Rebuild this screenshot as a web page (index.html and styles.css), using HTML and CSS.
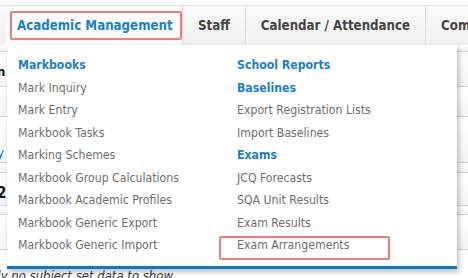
FILE: index.html
```html
<!DOCTYPE html>
<html lang="en">
<head>
    <meta charset="utf-8">
    <title>Academic Management</title>
    <link rel="stylesheet" href="styles.css">
</head>
<body>

    <!-- top menu -->
    <header class="topbar">
        <nav class="tabs">
            <a class="tab valgt" href="#"><span class="mark">Academic Management</span></a>
            <a class="tab" href="#">Staff</a>
            <a class="tab" href="#">Calendar / Attendance</a>
            <a class="tab" href="#">Communication</a>
        </nav>
    </header>

    <!-- page behind the menu -->
    <section class="bag">
        <div class="raekke r1"></div>
        <div class="raekke r2"><b class="stump">n</b></div>
        <div class="raekke r3"></div>
        <div class="raekke r4"><span class="stump blaa">y</span></div>
        <div class="raekke r5"></div>
        <div class="raekke r6"><b class="stump">2</b></div>
        <div class="raekke r7"></div>
        <div class="raekke r8"></div>
        <p class="tom">Currently no subject set data to show</p>
    </section>

    <!-- dropdown -->
    <div class="dropdown">
        <ul class="kolonne">
            <li class="overskrift">Markbooks</li>
            <li>Mark Inquiry</li>
            <li>Mark Entry</li>
            <li>Markbook Tasks</li>
            <li>Marking Schemes</li>
            <li>Markbook Group Calculations</li>
            <li>Markbook Academic Profiles</li>
            <li>Markbook Generic Export</li>
            <li>Markbook Generic Import</li>
        </ul>
        <ul class="kolonne">
            <li class="overskrift">School Reports</li>
            <li class="overskrift">Baselines</li>
            <li>Export Registration Lists</li>
            <li>Import Baselines</li>
            <li class="overskrift">Exams</li>
            <li>JCQ Forecasts</li>
            <li>SQA Unit Results</li>
            <li>Exam Results</li>
            <li class="markeret">Exam Arrangements</li>
        </ul>
    </div>

</body>
</html>
```

FILE: styles.css
```css
body {
    margin: 0;
    background-color: white;
    font-family: "DejaVu Sans Condensed", "DejaVu Sans", Verdana, sans-serif;
    width: 468px;
    height: 278px;
    overflow: hidden;
    position: relative;
}

/********************  Top menu  ********************/

.topbar {
    padding-top: 5px;
}

.tabs {
    display: flex;
    height: 39px;
    border-top: 1px solid #dedede;
    background: linear-gradient(#fbfbfb, #efefef);
    padding-left: 3px;
    white-space: nowrap;
}

.tab {
    display: flex;
    align-items: center;
    border-left: 1px solid #dcdcdc;
    color: #454545;
    font-weight: bold;
    font-size: 13.2px;
    text-decoration: none;
    padding: 0 15px;
}

.tab.valgt {
    background-color: #fdfdfd;
    padding: 0;
    margin-left: 3px;
    border-left: none;
    width: 178px;
}

.mark {
    color: #1b80c3;
    border: 2px solid #f17c7c;
    border-radius: 2px;
    margin-left: 4px;
    height: 25px;
    line-height: 25px;
    padding: 0 5px 0 5px;
    width: 158px;
}

/********************  Page behind  ********************/

.bag {
    font-size: 13px;
}

.raekke {
    border-bottom: 1px solid #d3d3d3;
    background: linear-gradient(#ffffff, #f3f3f3);
}

.r1 { height: 6px; }
.r2 { height: 34px; }
.r3 { height: 29px; }
.r4 { height: 45px; }
.r5 { height: 9px; }
.r6 { height: 32px; }
.r7 { height: 8px; }
.r8 { height: 34px; }

.stump {
    display: block;
    margin-left: -3px;
    color: #111;
}

.r2 .stump { padding-top: 12px; }
.r4 .stump { padding-top: 28px; color: #1b80c3; }
.r6 .stump { padding-top: 11px; font-size: 15px; }

.tom {
    margin: 18px 0 0 -47px;
    font-style: italic;
    font-size: 13px;
    color: #333;
}

/********************  Dropdown  ********************/

.dropdown {
    position: absolute;
    left: 7px;
    top: 45px;
    width: 439px;
    padding: 9px 0 9px 11px;
    background-color: white;
    border-bottom: 3px solid #0b7bc1;
    box-shadow: 2px 3px 5px rgba(0, 0, 0, 0.25);
    display: grid;
    grid-template-columns: 219px 1fr;
}

.kolonne {
    list-style: none;
    margin: 0;
    padding: 0;
}

.kolonne li {
    height: 22.5px;
    line-height: 22.5px;
    font-size: 12.2px;
    color: #6e6e6e;
    white-space: nowrap;
}

.kolonne li.overskrift {
    color: #1b80c3;
    font-weight: bold;
}

.markeret {
    position: relative;
}

/* red box round the chosen item */
.markeret::after {
    content: "";
    position: absolute;
    left: -18px;
    top: 2px;
    width: 167px;
    height: 20px;
    border: 2px solid #f17c7c;
    border-radius: 2px;
}
```
